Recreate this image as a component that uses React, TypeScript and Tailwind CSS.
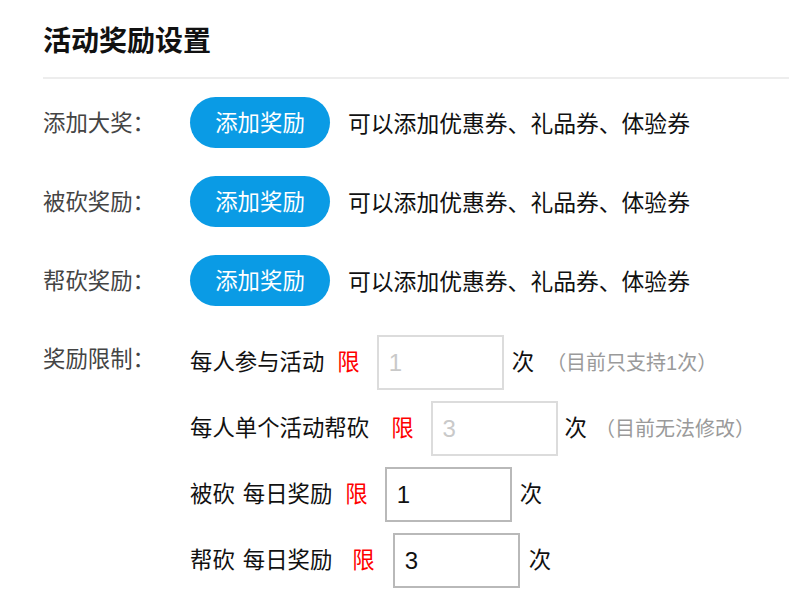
import React from "react";

const font = {
  fontFamily: '"Liberation Sans", "Noto Sans CJK SC", sans-serif',
};

function AwardRow({ label }: { label: string }) {
  return (
    <div className="flex items-center h-[51px]">
      <div className="w-[147px] shrink-0 text-[22.4px] text-[#444] pt-[3px]">{label}</div>
      <button className="w-[140px] h-[51px] rounded-full bg-[#0a9be5] text-white text-[22.4px] leading-none shrink-0 pt-[3px]">
        添加奖励
      </button>
      <span className="ml-[18px] text-[22.8px] text-[#111] whitespace-nowrap pt-[3px]">
        可以添加优惠券、礼品券、体验券
      </span>
    </div>
  );
}

export default function App() {
  return (
    <div className="bg-white w-[789px] h-[612px] overflow-hidden" style={font}>
      <div className="pl-[43px] pt-[28px]">
        <h2 className="text-[28px] leading-[28px] font-bold text-[#111]">活动奖励设置</h2>
        <div className="mt-[21px] h-[2px] bg-[#ededed]" />
        <div className="mt-[18px] flex flex-col gap-[28px]">
          <AwardRow label="添加大奖：" />
          <AwardRow label="被砍奖励：" />
          <AwardRow label="帮砍奖励：" />
          <div className="flex items-start mt-px">
            <div className="w-[147px] shrink-0 text-[22.4px] leading-[50px] text-[#444]">奖励限制：</div>
            <div className="flex flex-col gap-[11px] text-[22.4px] text-[#111]">
              <div className="flex items-center h-[55px] whitespace-nowrap">
                <span>每人参与活动</span>
                <span className="ml-[13px] text-[#ff0000]">限</span>
                <input
                  readOnly
                  placeholder="1"
                  className="ml-[17px] w-[127px] h-[55px] border-2 border-[#dcdcdc] pl-[10px] text-[24px] outline-none placeholder:text-[#c9c9c9]"
                />
                <span className="ml-[8px]">次</span>
                <span className="ml-[12px] text-[20px] text-[#9a9a9a]">（目前只支持1次）</span>
              </div>
              <div className="flex items-center h-[55px] whitespace-nowrap">
                <span>每人单个活动帮砍</span>
                <span className="ml-[22px] text-[#ff0000]">限</span>
                <input
                  readOnly
                  placeholder="3"
                  className="ml-[17px] w-[127px] h-[55px] border-2 border-[#dcdcdc] pl-[10px] text-[24px] outline-none placeholder:text-[#c9c9c9]"
                />
                <span className="ml-[7px]">次</span>
                <span className="ml-[8px] text-[20px] text-[#9a9a9a]">（目前无法修改）</span>
              </div>
              <div className="flex items-center h-[55px] whitespace-nowrap">
                <span>被砍</span>
                <span className="ml-[8px]">每日奖励</span>
                <span className="ml-[13px] text-[#ff0000]">限</span>
                <input
                  readOnly
                  defaultValue="1"
                  className="ml-[17px] w-[127px] h-[55px] border-2 border-[#b9b9b9] pl-[10px] text-[24px] text-[#111] outline-none"
                />
                <span className="ml-[8px]">次</span>
              </div>
              <div className="flex items-center h-[55px] whitespace-nowrap">
                <span>帮砍</span>
                <span className="ml-[8px]">每日奖励</span>
                <span className="ml-[20px] text-[#ff0000]">限</span>
                <input
                  readOnly
                  defaultValue="3"
                  className="ml-[18px] w-[127px] h-[55px] border-2 border-[#b9b9b9] pl-[10px] text-[24px] text-[#111] outline-none"
                />
                <span className="ml-[9px]">次</span>
              </div>
            </div>
          </div>
        </div>
      </div>
    </div>
  );
}
